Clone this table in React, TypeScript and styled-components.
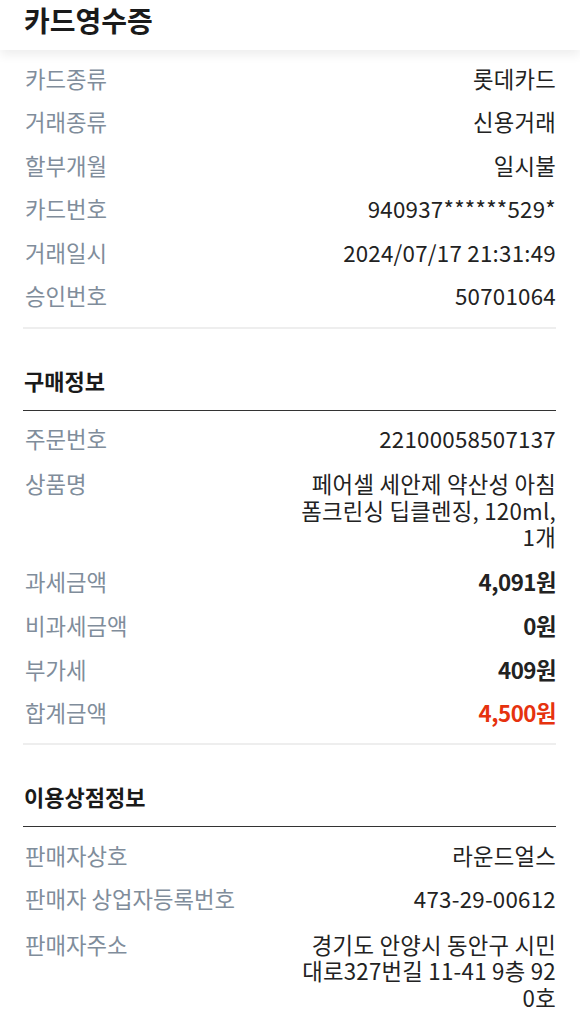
import React from "react";
import styled, { createGlobalStyle } from "styled-components";

const GlobalStyle = createGlobalStyle`
  html, body {
    margin: 0;
    padding: 0;
    background: #ffffff;
  }
  body {
    font-family: "Noto Sans CJK KR", "Noto Sans", sans-serif;
    color: #222222;
    -webkit-font-smoothing: antialiased;
  }
  * { box-sizing: border-box; }
`;

const Page = styled.div`
  width: 580px;
  background: #ffffff;
`;

const Header = styled.header`
  height: 50px;
  padding: 0 24px;
  display: flex;
  align-items: flex-start;
  background: #ffffff;
  box-shadow: 0 5px 10px rgba(0, 0, 0, 0.07);
  position: relative;
  z-index: 1;
`;

const Title = styled.h1`
  margin: 0;
  font-size: 28px;
  line-height: 40px;
  font-weight: 700;
  color: #1a1a1a;
  letter-spacing: 0;
`;

const Content = styled.main`
  padding: 0 24px 0 23px;
`;

const Section = styled.section<{ $divider?: boolean }>`
  padding: 6px 0 9px;
  border-bottom: ${(p) => (p.$divider ? "2px solid #eeeeee" : "none")};
`;

const SectionTitle = styled.h2`
  margin: 0;
  padding: 38px 1px 17px;
  font-size: 22px;
  line-height: 26px;
  font-weight: 700;
  color: #1a1a1a;
  border-bottom: 1px solid #333333;
`;

const Row = styled.div<{ $multi?: boolean }>`
  display: flex;
  justify-content: space-between;
  align-items: flex-start;
  padding: ${(p) => (p.$multi ? "10px 0 10px" : "8.5px 0")};
  gap: 16px;
`;

const Label = styled.span`
  flex-shrink: 0;
  white-space: nowrap;
  font-size: 22.3px;
  line-height: 26.6px;
  color: #808d9b;
  padding-left: 2px;
`;

const Value = styled.span<{ $bold?: boolean; $accent?: boolean }>`
  max-width: 257px;
  text-align: right;
  word-break: break-all;
  font-size: 22.3px;
  line-height: 26.6px;
  color: ${(p) => (p.$accent ? "#e6320e" : "#222222")};
  font-weight: ${(p) => (p.$bold ? 700 : 400)};
  letter-spacing: ${(p) => (p.$bold ? "-0.5px" : "0.25px")};
`;

type Item = { label: string; value: string; bold?: boolean; accent?: boolean; multi?: boolean };

const cardInfo: Item[] = [
  { label: "카드종류", value: "롯데카드" },
  { label: "거래종류", value: "신용거래" },
  { label: "할부개월", value: "일시불" },
  { label: "카드번호", value: "940937******529*" },
  { label: "거래일시", value: "2024/07/17 21:31:49" },
  { label: "승인번호", value: "50701064" },
];

const purchaseInfo: Item[] = [
  { label: "주문번호", value: "22100058507137" },
  { label: "상품명", value: "페어셀 세안제 약산성 아침 폼크린싱 딥클렌징, 120ml, 1개", multi: true },
  { label: "과세금액", value: "4,091원", bold: true },
  { label: "비과세금액", value: "0원", bold: true },
  { label: "부가세", value: "409원", bold: true },
  { label: "합계금액", value: "4,500원", bold: true, accent: true },
];

const shopInfo: Item[] = [
  { label: "판매자상호", value: "라운드얼스" },
  { label: "판매자 상업자등록번호", value: "473-29-00612" },
  { label: "판매자주소", value: "경기도 안양시 동안구 시민대로327번길 11-41 9층 920호", multi: true },
];

const Rows = ({ items }: { items: Item[] }) => (
  <>
    {items.map((it) => (
      <Row key={it.label} $multi={it.multi}>
        <Label>{it.label}</Label>
        <Value $bold={it.bold} $accent={it.accent}>
          {it.value}
        </Value>
      </Row>
    ))}
  </>
);

export default function App() {
  return (
    <Page>
      <GlobalStyle />
      <Header>
        <Title>카드영수증</Title>
      </Header>
      <Content>
        <Section $divider>
          <Rows items={cardInfo} />
        </Section>
        <SectionTitle>구매정보</SectionTitle>
        <Section $divider>
          <Rows items={purchaseInfo} />
        </Section>
        <SectionTitle>이용상점정보</SectionTitle>
        <Section>
          <Rows items={shopInfo} />
        </Section>
      </Content>
    </Page>
  );
}
